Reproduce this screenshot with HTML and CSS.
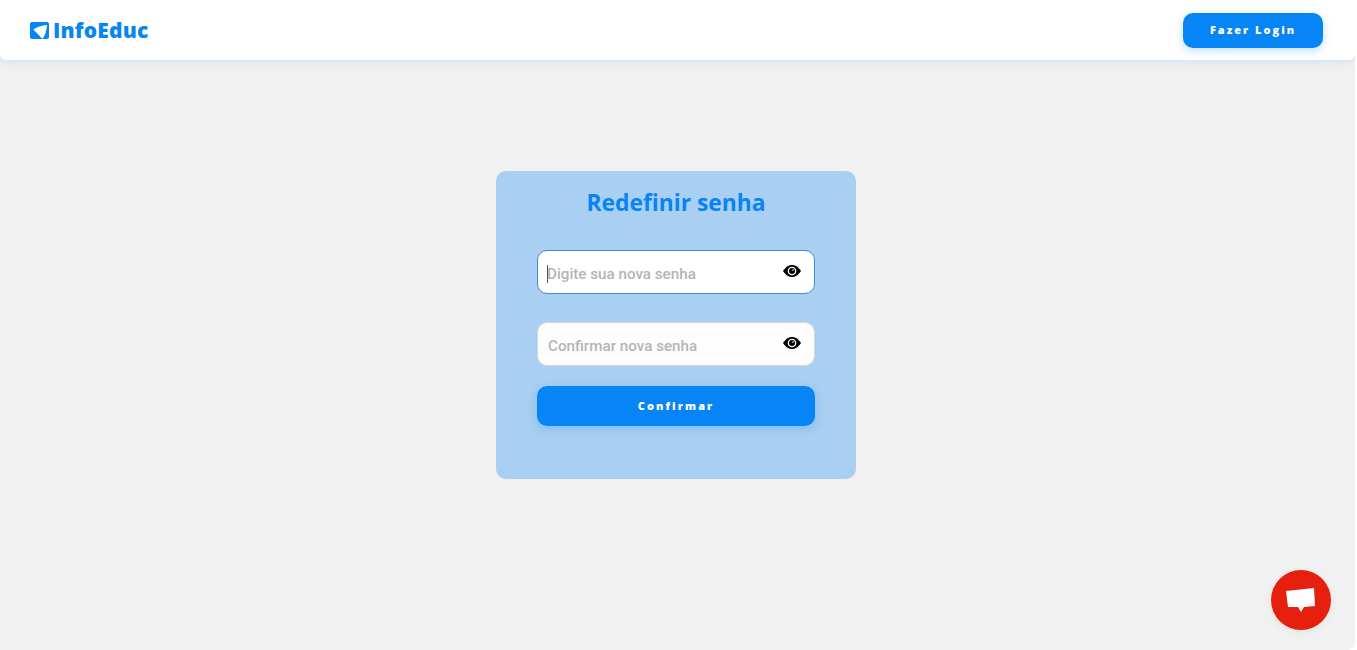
FILE: index.html
```html
<!DOCTYPE html>
<html lang="pt-BR">
<head>
  <meta charset="UTF-8" />
  <meta name="viewport" content="width=device-width, initial-scale=1.0" />
  <title>InfoEduc - Redefinir senha</title>
  <link rel="stylesheet" href="styles.css">
</head>
<body>

  <div class="app">
    <header class="navbar">
      <a class="logo" href="#">
        <svg class="logo-icon" viewBox="0 0 19 17" width="19" height="17">
          <rect width="19" height="17" rx="2" fill="#0784f6"/>
          <path fill="#fff" d="M3.300 7.500Q9 3.500 17 3 16.500 11 12.500 17 8 12 3.300 7.500z"/>
        </svg>
        <span>InfoEduc</span>
      </a>
      <button class="btn btn-login">Fazer Login</button>
    </header>

    <main class="content">
      <section class="card">
        <h1>Redefinir senha</h1>
        <form class="form">
          <div class="field field-focus">
            <span class="caret"></span>
            <input type="password" placeholder="Digite sua nova senha">
            <span class="eye">
              <svg viewBox="0 0 18 12" width="18" height="12"><path d="M0 6C3 1.500 6 0 9 0s6 1.500 9 6c-3 4.500-6 6-9 6S3 10.500 0 6z"/><circle cx="9" cy="6" r="4.300" fill="#fff"/><circle cx="9" cy="6" r="3"/><circle cx="10" cy="5" r=".8" fill="#fff"/></svg>
            </span>
          </div>
          <div class="field">
            <input type="password" placeholder="Confirmar nova senha">
            <span class="eye">
              <svg viewBox="0 0 18 12" width="18" height="12"><path d="M0 6C3 1.500 6 0 9 0s6 1.500 9 6c-3 4.500-6 6-9 6S3 10.500 0 6z"/><circle cx="9" cy="6" r="4.300" fill="#fff"/><circle cx="9" cy="6" r="3"/><circle cx="10" cy="5" r=".8" fill="#fff"/></svg>
            </span>
          </div>
          <button class="btn btn-submit" type="button">Confirmar</button>
        </form>
      </section>
    </main>

    <button class="chat" aria-label="Chat">
      <svg viewBox="0 0 30 26" width="30" height="26"><path fill="#fff" d="M0 4L28 1 29 19 18 20 15 25 12 20 2 20z"/></svg>
    </button>
  </div>

</body>
</html>
```

FILE: styles.css
```css
* {
  margin: 0;
  padding: 0;
  box-sizing: border-box;
}
html, body {
  height: 100%;
  overflow: hidden;
}
body {
  background: #fff;
  font-family: Roboto, sans-serif;
}
.app {
  position: relative;
  width: 1355px;
  height: 650px;
  background: #f1f1f1;
  border-radius: 0 0 8px 0;
  overflow: hidden;
}
.navbar {
  height: 60px;
  background: #fff;
  border-radius: 0 0 6px 6px;
  box-shadow: 0 2px 10px rgba(7, 132, 246, 0.14);
  display: flex;
  align-items: center;
  justify-content: space-between;
  padding: 0 32px 0 30px;
}
.logo {
  display: flex;
  align-items: center;
  gap: 4px;
  color: #0784f6;
  text-decoration: none;
  font-family: "Open Sans", sans-serif;
  font-weight: 800;
  font-size: 21px;
  letter-spacing: 0.2px;
  line-height: 20px;
}
.logo span {
  margin-top: -1px;
}
.btn {
  border: none;
  border-radius: 10px;
  background: #0784f6;
  color: #fff;
  font-family: "Open Sans", sans-serif;
  font-weight: 800;
  cursor: pointer;
}
.btn-login {
  width: 140px;
  height: 35px;
  margin-top: 1px;
  padding-bottom: 2px;
  font-size: 11px;
  letter-spacing: 2px;
  box-shadow: 0 3px 10px rgba(7, 132, 246, 0.25);
}
.content {
  display: flex;
  justify-content: center;
  padding: 111px 3px 0 0;
}
.card {
  width: 360px;
  height: 308px;
  background: #a9cff2;
  border-radius: 10px;
  padding: 16px 41px 0;
}
.card h1 {
  color: #0784f6;
  font-family: "Open Sans", sans-serif;
  font-size: 22.8px;
  font-weight: 700;
  line-height: 32px;
  text-align: center;
  margin-bottom: 31px;
}
.form {
  display: flex;
  flex-direction: column;
}
.field {
  position: relative;
  height: 44px;
  margin-bottom: 28px;
  background: #fdfdfd;
  border: 1px solid #d6d6d6;
  border-radius: 10px;
  display: flex;
  align-items: center;
}
.field-focus {
  background: #fff;
  border-color: #4a86e0;
}
.field input {
  width: 100%;
  height: 100%;
  padding: 3px 40px 0 10px;
  border: none;
  outline: none;
  background: transparent;
  font-family: Roboto, sans-serif;
  font-size: 15.2px;
  font-weight: 500;
}
.field-focus input {
  padding-left: 9px;
}
.field input::placeholder {
  color: #b5b5b5;
  opacity: 1;
}
.caret {
  position: absolute;
  left: 9px;
  top: 14px;
  width: 1px;
  height: 18px;
  background: #555;
}
.eye {
  position: absolute;
  right: 7px;
  top: 10px;
  width: 30px;
  height: 20px;
  display: flex;
  align-items: center;
  justify-content: center;
  background: #fff;
  border-radius: 3px;
}
.btn-submit {
  height: 40px;
  margin-top: -8px;
  padding-bottom: 2px;
  font-size: 11px;
  letter-spacing: 2.1px;
  box-shadow: 0 3px 10px rgba(7, 132, 246, 0.25);
}
.chat {
  position: absolute;
  right: 24px;
  bottom: 20px;
  width: 60px;
  height: 60px;
  border: none;
  border-radius: 50%;
  background: #e71f0f;
  box-shadow: 0 2px 8px rgba(0, 0, 0, 0.06);
  display: flex;
  align-items: center;
  justify-content: center;
  cursor: pointer;
}
```
